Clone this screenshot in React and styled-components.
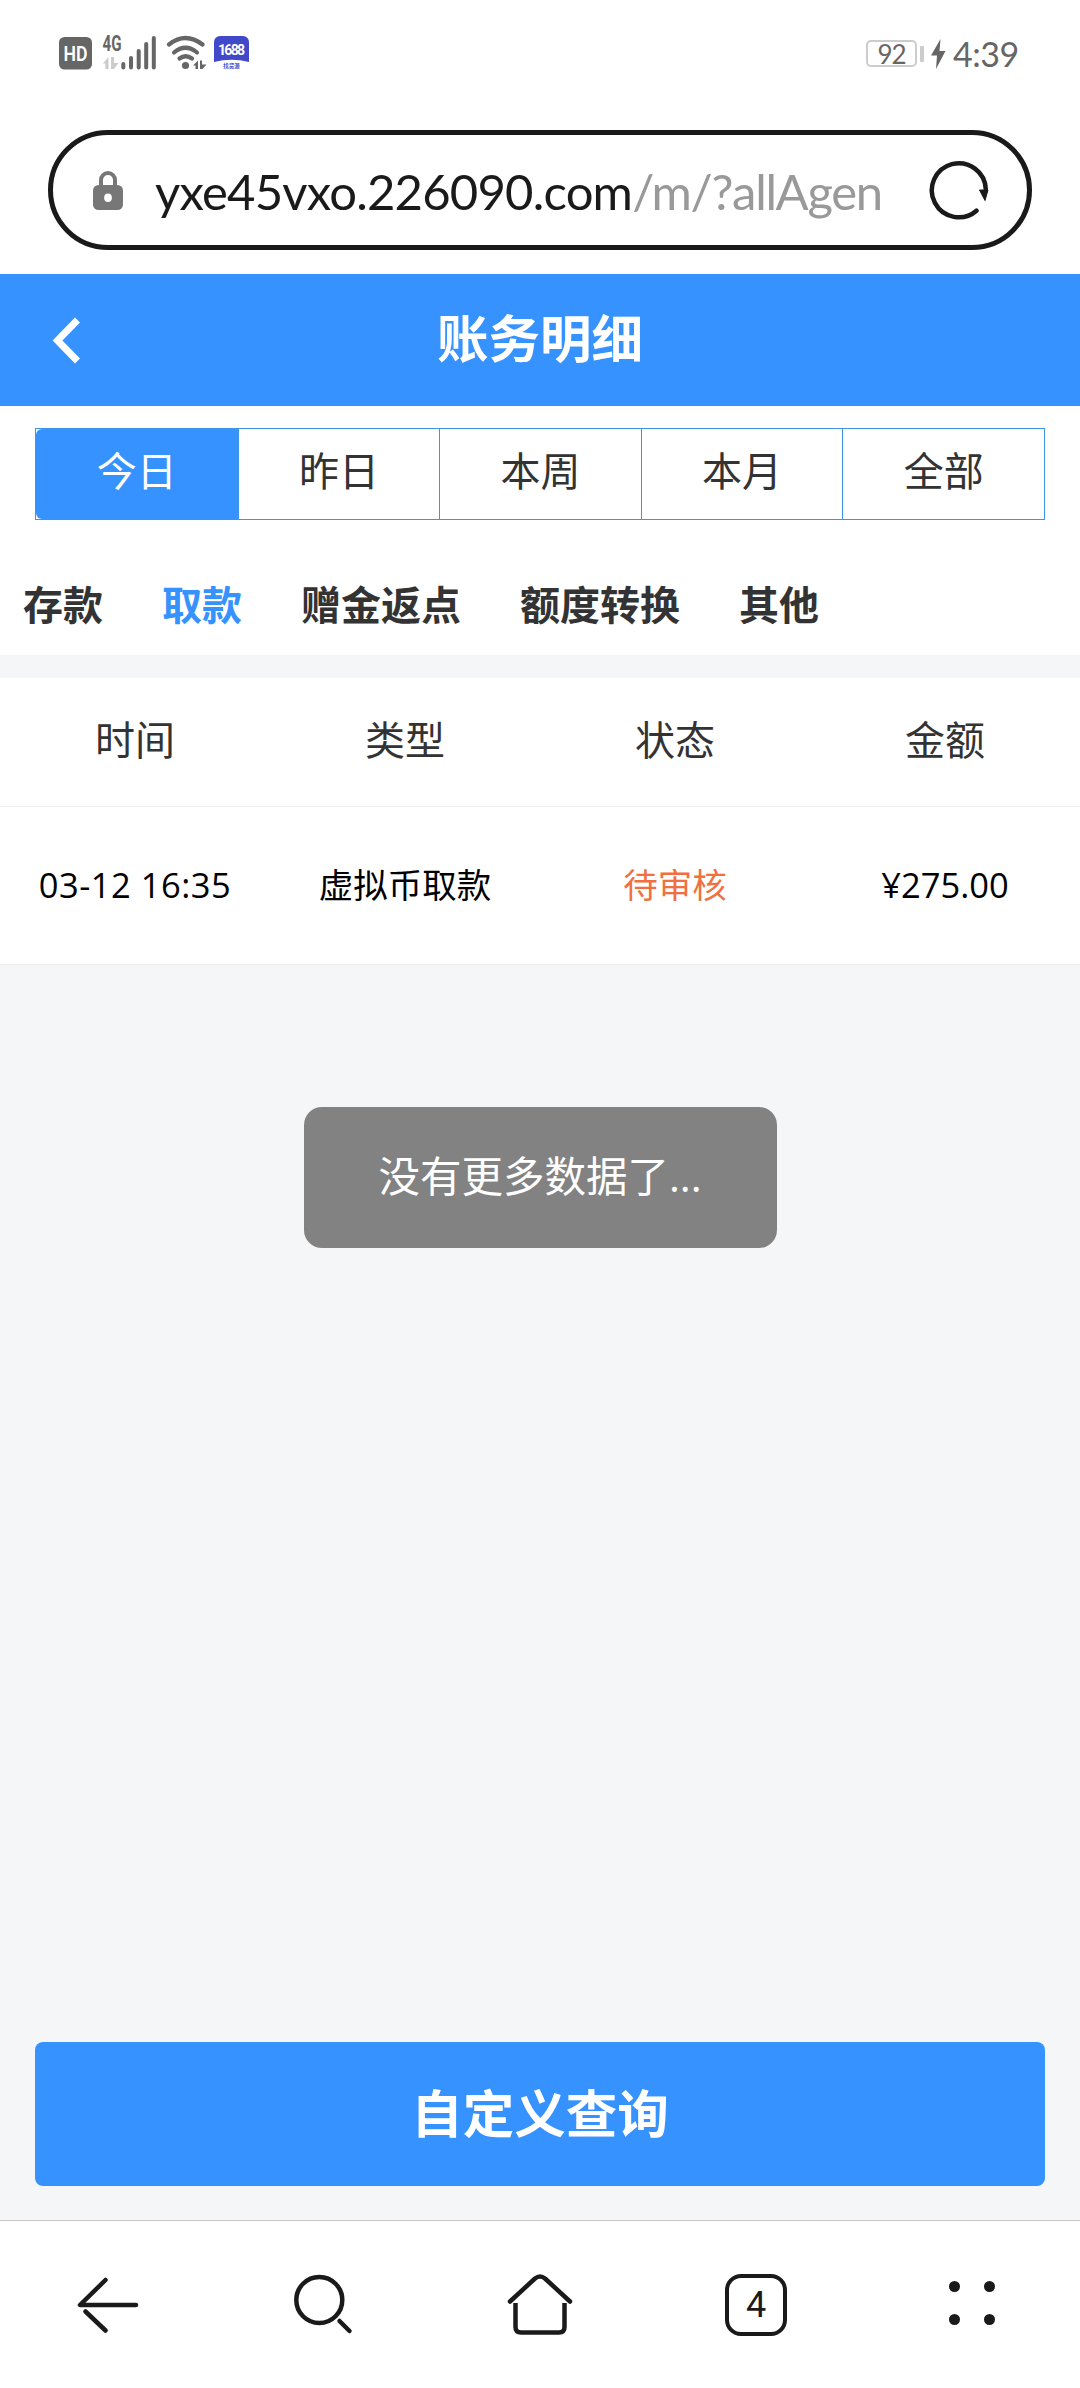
import { useState } from 'react';
import styled, { createGlobalStyle } from 'styled-components';

const ranges = ['今日', '昨日', '本周', '本月', '全部'];
const categories = ['存款', '取款', '赠金返点', '额度转换', '其他'];
const columns = ['时间', '类型', '状态', '金额'];
const records = [
    { time: '03-12 16:35', type: '虚拟币取款', status: '待审核', amount: '¥275.00' },
];

function StatusIcons(){
    return(
        <svg width="196" height="40" viewBox="56 33 196 40">
            <rect x="59" y="37" width="33" height="32.5" rx="5.5" fill="#666" />
            <StatusText x="75.5" y="60.5" $size={20} $fill="#fff" $weight={600} textLength="24" lengthAdjust="spacingAndGlyphs">HD</StatusText>
            <StatusText x="112" y="51" $size={21.5} $fill="#666" $weight={700} textLength="19" lengthAdjust="spacingAndGlyphs">4G</StatusText>
            <path d="M103 63.5l5.500-6.500v12h-3.200v-5.500zM111 57h3v6h4.500l-4.500 6h-3z" fill="#ccc" />
            <path d="M123.3 64v3.5M131 58v9.5M138.7 51v16.5M146.2 44v23.5M153.8 38v29.500" stroke="#666" strokeWidth="4" strokeLinecap="round" />
            <g fill="none" stroke="#666" strokeWidth="4.200" strokeLinecap="round">
                <path d="M169 44.500Q185.500 31.500 202.500 44.500" />
                <path d="M174 52.500Q185.500 43 197 52.500" />
                <path d="M179.500 58.500Q185.500 54 192 58.500" />
            </g>
            <circle cx="185.500" cy="65.500" r="3.600" fill="#666" />
            <path d="M193 65.500l5-5v8.500h-2.500v-3.500zM200 60.500h2v4h4.500l-4 4.500h-2.500z" fill="#666" />
            <rect x="214" y="36" width="35" height="34" rx="6" fill="#3f49c9" />
            <path d="M214 62Q231.500 57.500 249 62V66Q249 70.500 243 70.500H220Q214 70.500 214 66Z" fill="#fff" />
            <StatusText x="231.500" y="55" $size={14} $fill="#fff" $weight={700} textLength="27">1688</StatusText>
            <StatusText x="231.500" y="68" $size={5.5} $fill="#3f49c9" $weight={700}>找货源</StatusText>
        </svg>
    );
}

function BackIcon(){
    return(
        <svg width="32" height="50" viewBox="0 0 32 50">
            <path d="M27.500 5L7.500 25.500L27.500 46" fill="none" stroke="#fff" strokeWidth="7" />
        </svg>
    );
}

function App(){
    const [range, setRange] = useState('今日');
    const [category, setCategory] = useState('取款');

    return(
        <Screen>
            <GlobalStyle />
            <StatusBar>
                <StatusIcons />
                <StatusRight>
                    <Battery>92</Battery>
                    <BatteryCap />
                    <svg width="15" height="30" viewBox="0 0 15 30">
                        <path d="M9.500 0L0 16.500H6L5 30L14.500 12H8.500Z" fill="#666" />
                    </svg>
                    <Clock>4:39</Clock>
                </StatusRight>
            </StatusBar>
            <AddressArea>
                <AddressBar>
                    <svg width="30" height="39" viewBox="0 0 30 39">
                        <path d="M8 16V9a7 7 0 0 1 14 0v7" fill="none" stroke="#777" strokeWidth="4" />
                        <rect y="14" width="30" height="25" rx="5.500" fill="#777" />
                        <rect x="11.200" y="22.500" width="7.600" height="8.500" rx="3.800" fill="#fff" />
                    </svg>
                    <Url>yxe45vxo.226090.com<UrlPath>/m/?allAgen</UrlPath></Url>
                    <svg width="60" height="60" viewBox="0 0 60 60">
                        <path d="M47.500 50.700A27 27 0 1 1 56.800 29.500" fill="none" stroke="#1a1a1a" strokeWidth="4.500" strokeLinecap="round" />
                        <path d="M50.500 30h8.500l-3 10.500z" fill="#1a1a1a" stroke="#1a1a1a" strokeWidth="1" strokeLinejoin="round" />
                    </svg>
                </AddressBar>
            </AddressArea>
            <TitleBar>
                <BackIcon />
                <Title>账务明细</Title>
            </TitleBar>
            <Filters>
                <RangeTabs>
                    {ranges.map((name) => (
                        <RangeTab key={name} $active={name === range} onClick={() => setRange(name)}>
                            {name}
                        </RangeTab>
                    ))}
                </RangeTabs>
                <CategoryTabs>
                    {categories.map((name) => (
                        <CategoryTab key={name} $active={name === category} onClick={() => setCategory(name)}>
                            {name}
                        </CategoryTab>
                    ))}
                </CategoryTabs>
            </Filters>
            <TableHead>
                {columns.map((name) => <span key={name}>{name}</span>)}
            </TableHead>
            {records.map((record, i) => (
                <TableRow key={i}>
                    <Time>{record.time}</Time>
                    <span>{record.type}</span>
                    <Pending>{record.status}</Pending>
                    <span>{record.amount}</span>
                </TableRow>
            ))}
            <Empty>
                <Toast>没有更多数据了...</Toast>
            </Empty>
            <QueryButton>自定义查询</QueryButton>
            <BrowserNav>
                <NavItem>
                    <svg width="66" height="66" viewBox="75 2272 66 66">
                        <path d="M105.500 2280L80 2305H136M85.500 2311.500L105.500 2330.500" />
                    </svg>
                </NavItem>
                <NavItem>
                    <svg width="66" height="66" viewBox="291 2272 66 66">
                        <circle cx="319.300" cy="2300" r="23" />
                        <path d="M339.500 2321L349.500 2331" />
                    </svg>
                </NavItem>
                <NavItem>
                    <svg width="66" height="66" viewBox="507 2272 66 66">
                        <path d="M510 2301.500L535 2278.500Q540 2274.500 545 2278.500L570 2301.500" />
                        <path d="M515.500 2303V2327Q515.500 2332.500 521 2332.500H559Q564.500 2332.500 564.500 2327V2303" strokeLinecap="butt" />
                    </svg>
                </NavItem>
                <NavItem>
                    <TabCount>4</TabCount>
                </NavItem>
                <NavItem>
                    <Dots>
                        <i /><i /><i /><i />
                    </Dots>
                </NavItem>
            </BrowserNav>
        </Screen>
    );
}

const GlobalStyle = createGlobalStyle`
    * {
        box-sizing:border-box;
    }
    body {
        margin:0;
        background:#f4f6f8;
        font-family:"Open Sans", "Noto Sans CJK SC", sans-serif;
    }
    button {
        border:0;
        padding:0;
        background:none;
        font-family:inherit;
    }
    svg {
        display:block;
        flex-shrink:0;
    }
`

const Screen = styled.div`
    display:flex;
    flex-direction:column;
    width:1080px;
    height:2388px;
    overflow:hidden;
`

const StatusBar = styled.div`
    display:flex;
    justify-content:space-between;
    height:106px;
    padding:33px 60px 0 56px;
    background:#fff;
`

const StatusText = styled.text`
    font-family:Roboto, "Noto Sans CJK SC", sans-serif;
    font-size:${(props) => props.$size}px;
    font-weight:${(props) => props.$weight};
    fill:${(props) => props.$fill};
    text-anchor:middle;
`

const StatusRight = styled.div`
    display:flex;
    align-items:center;
    height:41px;
`

const Battery = styled.div`
    width:51px;
    height:27px;
    border:2px solid #ccc;
    border-radius:5px;
    color:#666;
    font-family:Lato, sans-serif;
    font-size:26px;
    line-height:24px;
    letter-spacing:-1px;
    text-align:center;
`

const BatteryCap = styled.div`
    width:4px;
    height:16px;
    margin:0 7px 0 3px;
    border-radius:1px;
    background:#ccc;
`

const Clock = styled.div`
    width:67px;
    margin-left:7px;
    color:#666;
    font-family:Lato, sans-serif;
    font-size:34px;
    line-height:40px;
    letter-spacing:-0.5px;
    white-space:nowrap;
`

const AddressArea = styled.div`
    height:168px;
    padding:24px 48px 0;
    background:#fff;
`

const AddressBar = styled.div`
    display:flex;
    align-items:center;
    height:120px;
    padding:0 38px 0 40px;
    border:5px solid #1a1a1a;
    border-radius:60px;
`

const Url = styled.div`
    flex:1;
    margin:0 40px 0 32px;
    padding-top:2px;
    overflow:hidden;
    color:#1a1a1a;
    font-family:Lato, sans-serif;
    font-size:49px;
    line-height:70px;
    letter-spacing:-0.8px;
    white-space:nowrap;
`

const UrlPath = styled.span`
    color:#999;
    letter-spacing:-1.3px;
`

const TitleBar = styled.header`
    display:grid;
    grid-template-columns:1fr auto 1fr;
    align-items:center;
    height:132px;
    padding:0 50px;
    background:#3592ff;
`

const Title = styled.h1`
    margin:0;
    padding-bottom:4px;
    color:#fff;
    font-size:51.500px;
    font-weight:700;
    line-height:72px;
`

const Filters = styled.div`
    height:249px;
    padding-top:22px;
    background:#fff;
`

const RangeTabs = styled.div`
    display:grid;
    grid-template-columns:repeat(5, 1fr);
    height:92px;
    margin:0 35px;
    border:1px solid #3d94e9;
`

const RangeTab = styled.button`
    padding-bottom:6px;
    color:${(props) => props.$active ? '#fff' : '#333'};
    background:${(props) => props.$active ? '#3592ff' : '#fff'};
    border-radius:${(props) => props.$active ? '6px 0 0 6px' : '0'};
    font-size:40px;
    line-height:60px;

    & + & {
        border-left:1px solid #3d94e9;
    }
`

const CategoryTabs = styled.div`
    display:flex;
    gap:59px;
    padding:55px 0 0 23px;
`

const CategoryTab = styled.button`
    color:${(props) => props.$active ? '#3592ff' : '#333'};
    font-size:40px;
    font-weight:700;
    line-height:60px;
    white-space:nowrap;
`

const TableHead = styled.div`
    display:grid;
    grid-template-columns:repeat(4, 1fr);
    height:129px;
    margin-top:23px;
    border-bottom:1px solid #eee;
    background:#fff;
    color:#333;
    font-size:40px;
    line-height:124px;
    text-align:center;
`

const TableRow = styled.div`
    display:grid;
    grid-template-columns:repeat(4, 1fr);
    height:158px;
    border-bottom:1px solid #eee;
    background:#fff;
    color:#000;
    font-size:34.500px;
    line-height:156px;
    text-align:center;
`

const Time = styled.span`
    letter-spacing:0.5px;
`

const Pending = styled.span`
    color:#f0703f;
`

const Empty = styled.div`
    flex:1;
    display:flex;
    justify-content:center;
    align-items:flex-start;
    padding-top:142px;
`

const Toast = styled.div`
    width:473px;
    height:141px;
    border-radius:18px;
    background:#828282;
    color:#fff;
    font-size:41.500px;
    line-height:138px;
    text-align:center;
`

const QueryButton = styled.button`
    height:144px;
    margin:0 35px 34px;
    padding-bottom:2px;
    border-radius:8px;
    background:#3592ff;
    color:#fff;
    font-size:51.500px;
    font-weight:700;
    line-height:72px;
`

const BrowserNav = styled.nav`
    display:grid;
    grid-template-columns:repeat(5, 1fr);
    height:168px;
    border-top:1px solid #c8c8c8;
    background:#fff;
`

const NavItem = styled.div`
    display:flex;
    align-items:center;
    justify-content:center;

    svg {
        fill:none;
        stroke:#1a1a1a;
        stroke-width:4.500px;
        stroke-linecap:round;
        stroke-linejoin:round;
    }
`

const TabCount = styled.div`
    width:62px;
    height:62px;
    border:4.500px solid #1a1a1a;
    border-radius:16px;
    color:#1a1a1a;
    font-family:Roboto, sans-serif;
    font-size:36px;
    line-height:54px;
    text-align:center;
`

const Dots = styled.div`
    display:grid;
    grid-template-columns:repeat(2, 11px);
    gap:22px 23.500px;
    margin-bottom:3px;

    i {
        height:11px;
        border-radius:50%;
        background:#1a1a1a;
    }
`

export default App;
